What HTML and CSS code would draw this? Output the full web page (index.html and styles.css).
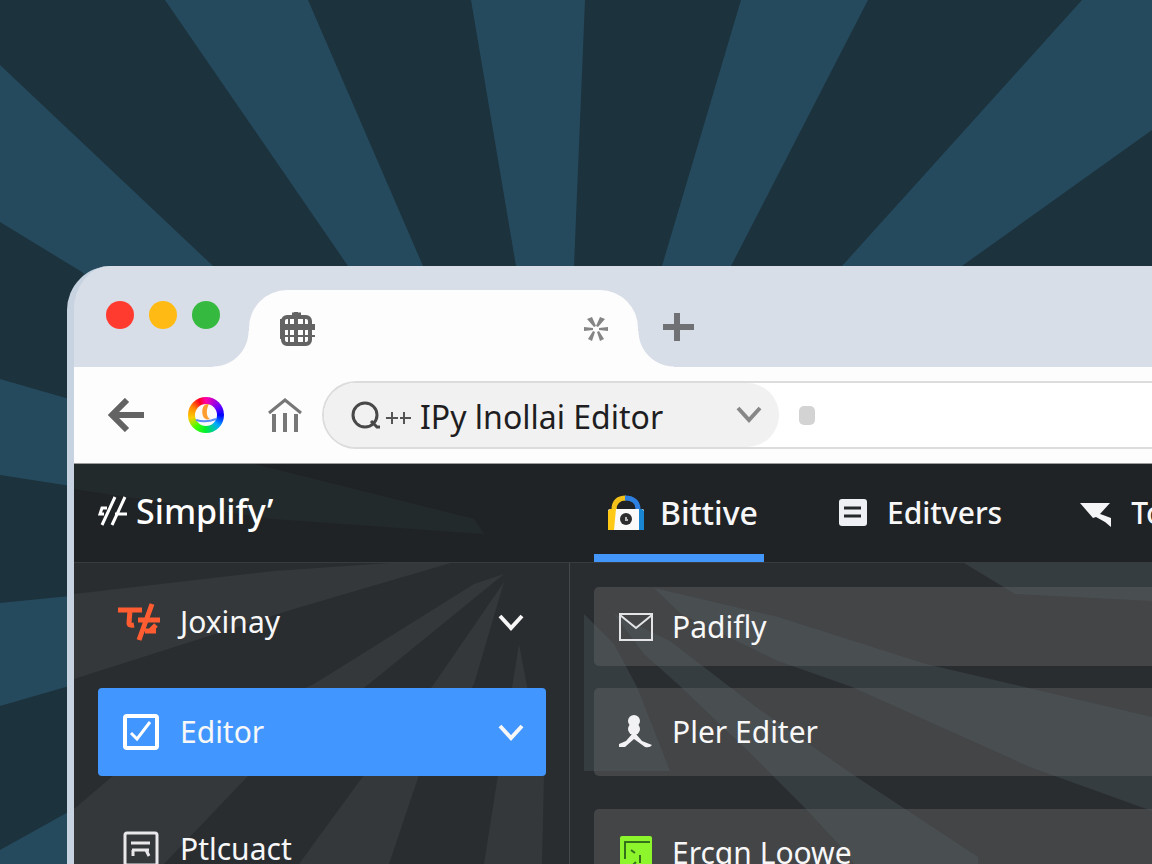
FILE: index.html
```
<!DOCTYPE html>
<html lang="en">
<head>
    <meta charset="UTF-8">
    <meta name="viewport" content="width=device-width, initial-scale=1.0">
    <title>Simplify Editor</title>
    <link rel="stylesheet" href="styles.css">
</head>
<body>

    <!-- sunburst backdrop -->
    <svg class="rays" viewBox="0 0 1152 864" preserveAspectRatio="xMidYMid slice" aria-hidden="true">
        <g fill="#264a5d">
            <path d="M0 65L213 266L230 300H110L82 272L0 222Z"/>
            <path d="M165 0H308L423 266V300H370L348 266Z"/>
            <path d="M471 0H585L574 266V300H520L516 266Z"/>
            <path d="M741 0H868L731 266L715 300H655L662 266Z"/>
            <path d="M1082 0H1152V130L962 266L920 300H820L842 266Z"/>
            <path d="M0 379L90 405V489L0 475Z"/>
            <path d="M0 603L90 594V680L0 706Z"/>
            <path d="M0 850L90 800V864H0Z"/>
        </g>
    </svg>

    <div class="window">
        <div class="tab-bar">
            <div class="dots">
                <span class="dot red"></span>
                <span class="dot yellow"></span>
                <span class="dot green"></span>
            </div>
            <div class="tab">
                <svg width="37" height="36" viewBox="0 0 37 36" fill="none" stroke="#636363" stroke-width="4">
                    <rect x="4" y="6" width="27" height="27" rx="4"/>
                    <path d="M13 4H22" stroke-width="5"/>
                    <path d="M17 1V33" stroke-width="4"/>
                    <path d="M3 16H36" stroke-width="6"/>
                    <path d="M2 25H36" stroke-width="2"/>
                    <path d="M10 8V32M25 8V32" stroke-width="2"/>
                    <path d="M2 8V28" stroke-width="2"/>
                </svg>
                <button class="icon-btn" aria-label="Close tab">
                    <svg width="24" height="24" viewBox="0 0 24 24" fill="#858585">
                        <path d="M0 10L9 11V13L0 14ZM24 10L15 11V13L24 14Z"/>
                        <path d="M3 2L8 0L12 9L10 10ZM21 2L16 0L12 9L14 10Z"/>
                        <path d="M4 22L8 24L11 15L9 14ZM20 22L16 24L13 15L15 14Z"/>
                    </svg>
                </button>
            </div>
            <button class="icon-btn new-tab" aria-label="New tab">
                <svg width="31" height="28" viewBox="0 0 31 28" stroke="#707175" stroke-width="6"><path d="M0 14H31M14 0V28"/></svg>
            </button>
        </div>

        <div class="toolbar">
            <button class="icon-btn" aria-label="Back">
                <svg width="36" height="34" viewBox="0 0 36 34" fill="none" stroke="#636363" stroke-width="6"><path d="M3 17H36M19 2L4 17L19 32"/></svg>
            </button>
            <button class="icon-btn" aria-label="Profile">
                <span class="wheel">
                    <svg width="24" height="24" viewBox="0 0 24 24">
                        <circle cx="12" cy="12" r="11" fill="#fafafa"/>
                        <path d="M15 1C9 0 7 7 9 13C10 16 13 17 16 16C12 14 12 6 15 1Z" fill="#ff9d2e"/>
                        <path d="M2 17Q12 20 22 16" stroke="#5b8cf5" stroke-width="2" fill="none"/>
                    </svg>
                </span>
            </button>
            <button class="icon-btn" aria-label="Home">
                <svg width="34" height="34" viewBox="0 0 34 34" fill="none" stroke="#777" stroke-width="3"><path d="M1 15L17 2L33 15"/><path d="M6 16V34M17 15V34M28 16V34" stroke-width="4"/></svg>
            </button>
            <form class="address">
                <div class="pill">
                    <svg width="30" height="30" viewBox="0 0 30 30" fill="none" stroke="#484848" stroke-width="3"><circle cx="14" cy="15" r="12"/><path d="M20 21L26 27H29"/></svg>
                    <svg width="26" height="20" viewBox="0 0 26 20" stroke="#555" stroke-width="2"><path d="M0 13H12M14 13H25M6 7V19M18 7V19"/></svg>
                    <input type="text" aria-label="Address" value="IPy lnollai Editor">
                    <button type="button" class="icon-btn" aria-label="Show suggestions">
                        <svg width="26" height="18" viewBox="0 0 26 18" fill="none" stroke="#878787" stroke-width="4"><path d="M2 2L13 14L24 2"/></svg>
                    </button>
                </div>
                <span class="marker"></span>
            </form>
        </div>

        <div class="app">
            <svg class="app-rays" viewBox="0 0 1078 400" aria-hidden="true">
                <path d="M0 0H180L400 55L410 70L200 55L0 25Z" fill="#3a4a4e"/>
                <g fill="#34383a">
                    <path d="M0 130L200 107L330 98H380L220 145L0 215Z"/>
                    <path d="M0 345L40 311L240 220L400 120L430 110L295 220L175 311L90 400H0Z"/>
                    <path d="M430 118L360 220L290 311L225 400H315L345 311L400 220Z"/>
                    <path d="M445 180L424 311L410 400H468L470 311Z"/>
                </g>
                <g fill="#353d40">
                    <path d="M890 99H1078V137L941 130Z"/>
                    <path d="M580 124L704 153L852 200L1078 253V347L956 303L778 223L704 197L607 150Z"/>
                    <path d="M540 150L596 177L682 243L778 310L904 393V400H780L771 387L730 343L674 287L607 223L570 190Z"/>
                    <path d="M510 150L540 180L563 223L596 307H510Z"/>
                </g>
            </svg>
            <header>
                <a class="brand" href="#">
                    <svg width="30" height="30" viewBox="0 0 30 30" fill="none" stroke="#fff" stroke-width="3"><path d="M9 12H4L2 18H6"/><path d="M17 1L4 29M27 1L14 29M17 18H29"/></svg>
                    <span>Simplify’</span>
                </a>
                <nav class="tabs">
                    <a class="active" href="#">
                        <svg width="36" height="36" viewBox="0 0 36 36">
                            <path d="M6 15C6 6 11 3 18 3" fill="none" stroke="#f2c21a" stroke-width="5"/>
                            <path d="M17 3C25 3 30 7 30 14" fill="none" stroke="#2d7fe0" stroke-width="5"/>
                            <rect y="14" width="36" height="21" rx="2" fill="#fafafa"/>
                            <path d="M2 14H8L6 35H0V16Z" fill="#ffc916"/>
                            <path d="M31 14H34L36 16V35H31Z" fill="#1986d4"/>
                            <circle cx="18" cy="24" r="6" fill="#2d2d30"/>
                            <path d="M18 22V25H20" fill="none" stroke="#b9b9b9" stroke-width="2"/>
                        </svg>
                        Bittive
                    </a>
                    <a href="#">
                        <svg width="36" height="36" viewBox="0 0 36 36"><rect x="4" y="4" width="28" height="27" rx="3" fill="#eef0f5"/><path d="M9 13H26M9 21H26" stroke="#25282b" stroke-width="3"/></svg>
                        Editvers
                    </a>
                    <a href="#">
                        <svg width="36" height="36" viewBox="0 0 36 36" fill="#f5f5f7"><path d="M1 8H31L21 19L24 20L32 23V32L26 27L17 22L14 23Z"/></svg>
                        Tools
                    </a>
                </nav>
            </header>

            <div class="body">
                <aside class="sidebar">
                    <div class="group">
                        <button class="item">
                            <svg class="logo" width="42" height="38" viewBox="0 0 42 38" fill="none" stroke="#ff5c31" stroke-width="5"><path d="M0 7H24M12 7L11 20Q11 23 16 22M34 1L21 37M20 17H42M27 28H38M38 22L33 27"/></svg>
                            <span>Joxinay</span>
                            <svg class="chevron" width="26" height="18" viewBox="0 0 26 18"><path d="M2 3L13 15L24 3"/></svg>
                        </button>
                        <button class="item selected">
                            <svg width="36" height="36" viewBox="0 0 36 36" fill="none" stroke="#fff" stroke-width="4"><rect x="2" y="2" width="32" height="32" rx="2"/><path d="M8 19L14 25L27 8" stroke-width="3"/></svg>
                            <span>Editor</span>
                            <svg class="chevron" width="26" height="18" viewBox="0 0 26 18"><path d="M2 3L13 15L24 3"/></svg>
                        </button>
                    </div>
                    <div class="group">
                        <button class="item">
                            <svg width="36" height="36" viewBox="0 0 36 36" fill="none" stroke="#e8e8ea" stroke-width="3"><rect x="2" y="2" width="32" height="32" rx="2"/><path d="M8 12H27M9 19H26M10 25V19M26 25L23 19"/></svg>
                            <span>Ptlcuact</span>
                        </button>
                    </div>
                </aside>

                <main class="panel">
                    <div class="group">
                        <button class="card slim">
                            <svg width="36" height="36" viewBox="0 0 36 36" fill="none" stroke="#e4e4e6" stroke-width="2"><rect x="2" y="5" width="32" height="26"/><path d="M2 6L18 19L34 6"/></svg>
                            <span>Padifly</span>
                        </button>
                        <button class="card">
                            <svg width="36" height="36" viewBox="0 0 36 36" fill="#f2f2f4"><circle cx="16" cy="7" r="6"/><circle cx="16" cy="15" r="6"/><path d="M14 20H18L24 27L34 31Q32 34 27 33L16 25L7 33H1V30L8 27Z"/></svg>
                            <span>Pler Editer</span>
                        </button>
                    </div>
                    <div class="group">
                        <button class="card">
                            <svg width="36" height="36" viewBox="0 0 36 36"><rect x="2" y="1" width="32" height="34" rx="2" fill="#8cf52c"/><path d="M7 24V7H32M13 15L17 18M22 20V28M14 31L18 27M22 31L28 33" fill="none" stroke="#35701b" stroke-width="2"/></svg>
                            <span>Ercqn Loowe</span>
                        </button>
                    </div>
                </main>
            </div>
        </div>
    </div>

</body>
</html>
```

FILE: styles.css
```
* { box-sizing: border-box; }
body { margin: 0; height: 100vh; overflow: hidden; display: flow-root; position: relative; background-color: #1c323d; font-family: 'Noto Sans', 'Open Sans', sans-serif; font-size: 30px; line-height: 40px; }
svg { flex: none; display: block; }
button { font: inherit; color: inherit; border: none; background: none; cursor: pointer; }
a { color: inherit; text-decoration: none; }
.rays { position: absolute; top: 0; left: 0; width: 100%; height: 100%; }

/* browser window, runs off the right and bottom edges */
.window { position: relative; display: flex; flex-direction: column; height: calc(100vh - 266px); margin: 266px 0 0 67px; border-left: 7px solid #c7d3e0; border-top-left-radius: 44px; overflow: hidden; background: #d8dee7; }

.tab-bar { flex: none; display: flex; height: 101px; padding-left: 32px; background: #d8dee7; }
.dots { display: flex; gap: 15px; padding-top: 35px; width: 143px; }
.dot { width: 28px; height: 28px; border-radius: 50%; }
.red { background: #ff3b30; }
.yellow { background: #ffba14; }
.green { background: #35b93f; }
.tab { position: relative; display: flex; align-items: center; justify-content: space-between; width: 389px; margin-top: 24px; padding: 0 30px; background: #fdfdfe; border-radius: 38px 38px 0 0; }
.tab::before, .tab::after { content: ''; position: absolute; bottom: 0; width: 36px; height: 36px; }
.tab::before { right: 100%; background: radial-gradient(circle at 0 0, transparent 35px, #fdfdfe 36px); }
.tab::after { left: 100%; background: radial-gradient(circle at 100% 0, transparent 35px, #fdfdfe 36px); }
.icon-btn { padding: 0; flex: none; }
.new-tab { align-self: center; margin-top: 20px; margin-left: 25px; }

.toolbar { flex: none; display: flex; align-items: center; gap: 44px; height: 97px; padding-left: 34px; background: #fdfdfe; border-bottom: 1px solid #9a9c9d; }
.wheel { display: grid; place-items: center; width: 36px; height: 36px; border-radius: 50%; background: conic-gradient(#f0a, #60f 60deg, #00f 90deg, #0af 130deg, #0e3 180deg, #4f0 220deg, #fc0 260deg, #f80 300deg, #f02 335deg, #f0a); }
.address { flex: 1; display: flex; align-items: center; height: 68px; margin-left: -24px; border: 2px solid #dcdcdc; border-right: none; border-radius: 34px 0 0 34px; background: #fff; }
.pill { display: flex; align-items: center; width: 455px; height: 64px; padding: 0 17px 0 27px; border-radius: 32px; background: #f1f1f1; }
.pill input { flex: 1; min-width: 0; margin: 0 0 0 8px; padding: 4px 0 0; border: none; outline: none; background: none; font: inherit; font-size: 32px; color: #1e1e22; }
.pill svg + svg { margin-left: 5px; }
.marker { width: 16px; height: 19px; margin-left: 20px; border-radius: 5px; background: #d3d3d3; }

.app { position: relative; flex: 1; background: #2a2d30; color: #f7f7f8; }
.app-rays { position: absolute; top: 0; left: 0; width: 100%; }
header { display: grid; grid-template-columns: 496px 1fr; height: 99px; background: rgba(28, 32, 34, 0.75); border-bottom: 1px solid #383c3f; position: relative; }
.brand { display: flex; align-items: center; gap: 8px; padding: 0 0 4px 24px; font-size: 34px; font-weight: 500; color: #fff; }
.tabs { display: flex; gap: 57px; padding-left: 24px; overflow: hidden; }
.tabs a { display: flex; align-items: center; gap: 16px; padding: 0 6px 0 14px; border-top: 8px solid transparent; border-bottom: 8px solid transparent; font-weight: 500; white-space: nowrap; }
.tabs .active { border-bottom-color: #4397fb; font-size: 32px; }

.body { position: relative; display: grid; grid-template-columns: 496px 1fr; }
.group { display: flex; flex-direction: column; gap: 22px; }
.sidebar { padding: 15px 23px 0 24px; border-right: 1px solid #44484b; }
.sidebar .group + .group { margin-top: 29px; }
.item { display: flex; align-items: center; height: 88px; padding: 0 22px 0 25px; border-radius: 4px; }
.item .logo { margin: 0 -1px 0 -5px; }
.item span { margin-left: 21px; }
.chevron { margin-left: auto; fill: none; stroke: #f7f7f8; stroke-width: 4; }
.selected { background: #4197ff; }

.panel { padding: 24px 0 0 24px; }
.panel .group + .group { margin-top: 33px; }
.card { display: flex; align-items: center; gap: 18px; height: 88px; padding: 0 0 0 24px; border-radius: 5px 0 0 5px; background: rgba(105, 105, 107, 0.4); }
.slim { height: 79px; }
```
